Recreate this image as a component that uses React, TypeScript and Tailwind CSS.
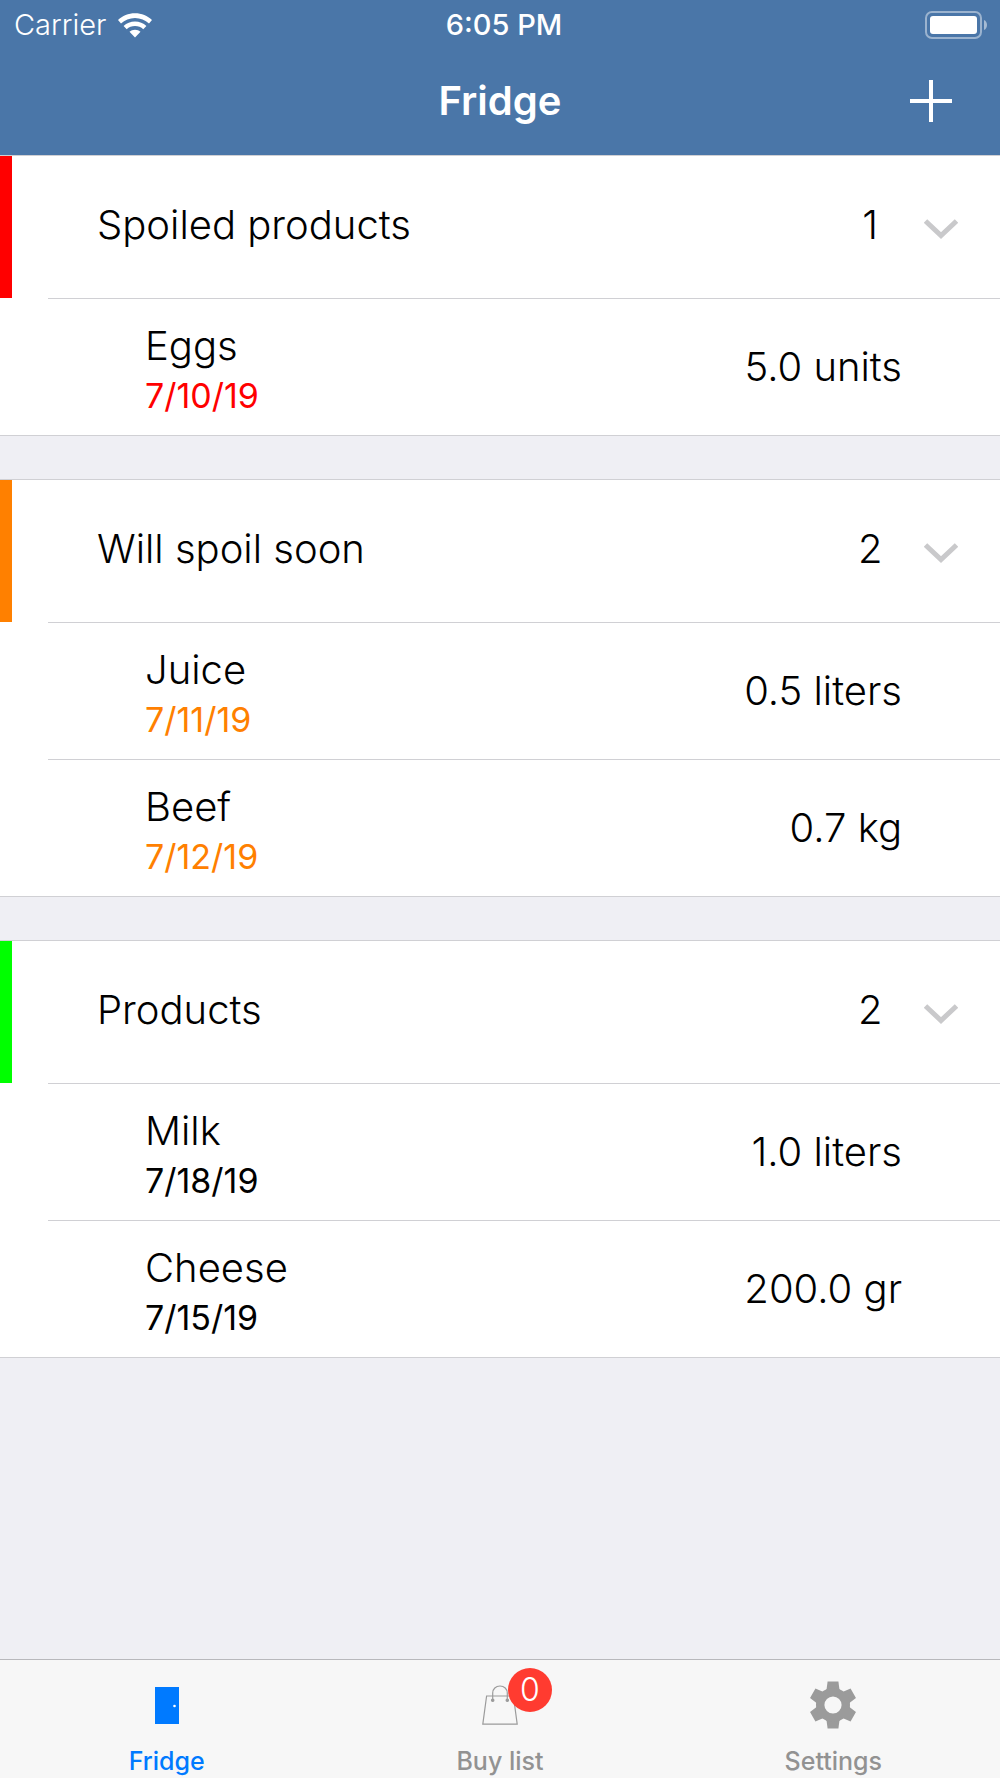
import { useState } from 'react';
import clsx from 'clsx';

const sections = [
  {
    id: 'spoiled',
    title: 'Spoiled products',
    bar: 'bg-[#ff0000]',
    date: 'text-[#ff0000]',
    items: [{ id: 1, name: 'Eggs', date: '7/10/19', amount: '5.0 units' }],
  },
  {
    id: 'soon',
    title: 'Will spoil soon',
    bar: 'bg-[#ff8000]',
    date: 'text-[#ff8000]',
    items: [
      { id: 2, name: 'Juice', date: '7/11/19', amount: '0.5 liters' },
      { id: 3, name: 'Beef', date: '7/12/19', amount: '0.7 kg' },
    ],
  },
  {
    id: 'products',
    title: 'Products',
    bar: 'bg-[#00ff00]',
    date: 'text-black',
    items: [
      { id: 4, name: 'Milk', date: '7/18/19', amount: '1.0 liters' },
      { id: 5, name: 'Cheese', date: '7/15/19', amount: '200.0 gr' },
    ],
  },
];

function WifiIcon() {
  return (
    <svg viewBox="0 0 34 25" className="w-[34px] h-[25px]" fill="#fff" aria-hidden="true">
      <path d="M17 0.3C23.6 0.3 29.6 2.8 34 7L31 10.4C27.3 7 22.4 4.9 17 4.9S6.7 7 3 10.4L0 7C4.4 2.8 10.4 0.3 17 0.3Z" />
      <path d="M17 8.4C21.4 8.4 25.4 10.1 28.4 12.9L25.3 16.2C23.1 14.2 20.2 13 17 13S10.9 14.2 8.7 16.2L5.6 12.9C8.6 10.1 12.6 8.4 17 8.4Z" />
      <path d="M17 16.7C19.1 16.7 21 17.5 22.5 18.8L17 24.6L11.5 18.8C13 17.5 14.9 16.7 17 16.7Z" />
    </svg>
  );
}

function BatteryIcon() {
  return (
    <svg viewBox="0 0 63 28" className="w-[63px] h-7" aria-label="Battery full">
      <rect x="1" y="1" width="55" height="26" rx="6" fill="none" stroke="#fff" strokeOpacity="0.45" strokeWidth="2" />
      <rect x="5" y="5" width="47" height="18" rx="3" fill="#fff" />
      <path d="M59 9C63 10.5 63 17.5 59 19Z" fill="#fff" fillOpacity="0.5" />
    </svg>
  );
}

function ChevronIcon() {
  return (
    <svg viewBox="0 0 34 20" className="w-[34px] h-5" fill="none" stroke="#c9c9cb" strokeWidth="5" aria-hidden="true">
      <path d="M1.5 2L17 16.5L32.5 2" />
    </svg>
  );
}

function DoorIcon() {
  return (
    <svg viewBox="0 0 24 37" className="w-6 h-[37px]" aria-hidden="true">
      <rect width="24" height="37" fill="#007aff" />
      <circle cx="19.5" cy="19" r="1.3" fill="#fff" />
    </svg>
  );
}

function BagIcon() {
  return (
    <svg viewBox="0 0 36 40" className="w-9 h-10" fill="none" stroke="#9b9b9b" strokeWidth="1.2" aria-hidden="true">
      <path d="M4.6 11H31.4L35.2 39.2H0.8Z" />
      <path d="M10.7 15V8C10.7 4 13.8 1 18 1S25.3 4 25.3 8V15" />
      <circle cx="10.7" cy="15.3" r="1.2" fill="#9b9b9b" />
      <circle cx="25.3" cy="15.3" r="1.2" fill="#9b9b9b" />
    </svg>
  );
}

function GearIcon() {
  return (
    <svg viewBox="-24 -24 48 48" className="size-12" fill="#9b9b9b" aria-hidden="true">
      {[0, 60, 120, 180, 240, 300].map((angle) => (
        <path key={angle} transform={`rotate(${angle})`} d="M-5.4 -23.4H5.4L6.4 -16L9 -10H-9L-6.4 -16Z" />
      ))}
      <circle r="12.8" fill="none" stroke="#9b9b9b" strokeWidth="8.4" />
    </svg>
  );
}

const tabs = [
  { id: 'fridge', label: 'Fridge', icon: DoorIcon },
  { id: 'buy', label: 'Buy list', icon: BagIcon, badge: 0 },
  { id: 'settings', label: 'Settings', icon: GearIcon },
];

export default function App() {
  const [closed, setClosed] = useState<string[]>([]);

  const toggle = (id: string) =>
    setClosed((prev) => (prev.includes(id) ? prev.filter((x) => x !== id) : [...prev, id]));

  return (
    <div className="min-h-screen flex flex-col bg-[#efeff4] font-[Inter,sans-serif] text-black">
      <header className="bg-[#4a76a8] text-white">
        {/* Status bar */}
        <div className="grid grid-cols-3 items-center h-[50px] text-[29px] leading-8">
          <div className="flex items-center gap-3 pl-[14px] font-light">
            <span>Carrier</span>
            <WifiIcon />
          </div>
          <span className="pl-2 text-center font-medium">6:05 PM</span>
          <div className="flex justify-end pr-3">
            <BatteryIcon />
          </div>
        </div>
        {/* Navigation bar */}
        <div className="grid grid-cols-3 items-center h-[105px] pb-1">
          <h1 className="col-start-2 text-center text-[40px] leading-[48px] font-semibold">Fridge</h1>
          <button type="button" aria-label="Add product" className="justify-self-end mr-12">
            <svg viewBox="0 0 42 42" className="size-[42px]" stroke="#fff" strokeWidth="4" aria-hidden="true">
              <path d="M21 0V42M0 21H42" />
            </svg>
          </button>
        </div>
      </header>

      <main className="flex-1 flex flex-col gap-[43px] text-[40px] leading-[48px] font-light">
        {sections.map((section) => (
          <section key={section.id} className="bg-white border-y border-[#d0d0d4]">
            <button
              type="button"
              aria-expanded={!closed.includes(section.id)}
              onClick={() => toggle(section.id)}
              className="flex items-stretch w-full h-[142px] text-left"
            >
              <span className={clsx('w-3 shrink-0', section.bar)} />
              <span className="flex-1 flex items-center pl-[85px] pr-[42px]">
                <span className="flex-1 pb-1">{section.title}</span>
                <span className="w-6 mr-[42px] pb-1 text-center">{section.items.length}</span>
                <span className="pt-1">
                  <ChevronIcon />
                </span>
              </span>
            </button>
            {!closed.includes(section.id) && (
              <ul className="pl-12">
                {section.items.map((item) => (
                  <li key={item.id} className="flex items-center justify-between h-[137px] pl-[97px] pr-[98px] border-t border-[#d0d0d4]">
                    <div className="pt-[10px]">
                      <p>{item.name}</p>
                      <p className={clsx('text-[34px] leading-[52px] font-normal', section.date)}>{item.date}</p>
                    </div>
                    <p>{item.amount}</p>
                  </li>
                ))}
              </ul>
            )}
          </section>
        ))}
      </main>

      <nav className="grid grid-cols-3 h-[119px] bg-[#f7f7f7] border-t border-[#b8b8bc] text-[25px] leading-7 font-medium">
        {tabs.map((tab) => (
          <a
            key={tab.id}
            href={`#${tab.id}`}
            aria-current={tab.id === 'fridge' ? 'page' : undefined}
            className={clsx('flex flex-col items-center pt-5', tab.id === 'fridge' ? 'text-[#007aff]' : 'text-[#929292]')}
          >
            <span className="relative flex items-center justify-center h-[50px]">
              <tab.icon />
              {tab.badge !== undefined && (
                <span className="absolute -top-3 left-[26px] flex items-center justify-center size-11 rounded-full bg-[#ff3b30] text-white text-[32px] font-light">
                  {tab.badge}
                </span>
              )}
            </span>
            <span className="mt-[17px]">{tab.label}</span>
          </a>
        ))}
      </nav>
    </div>
  );
}
